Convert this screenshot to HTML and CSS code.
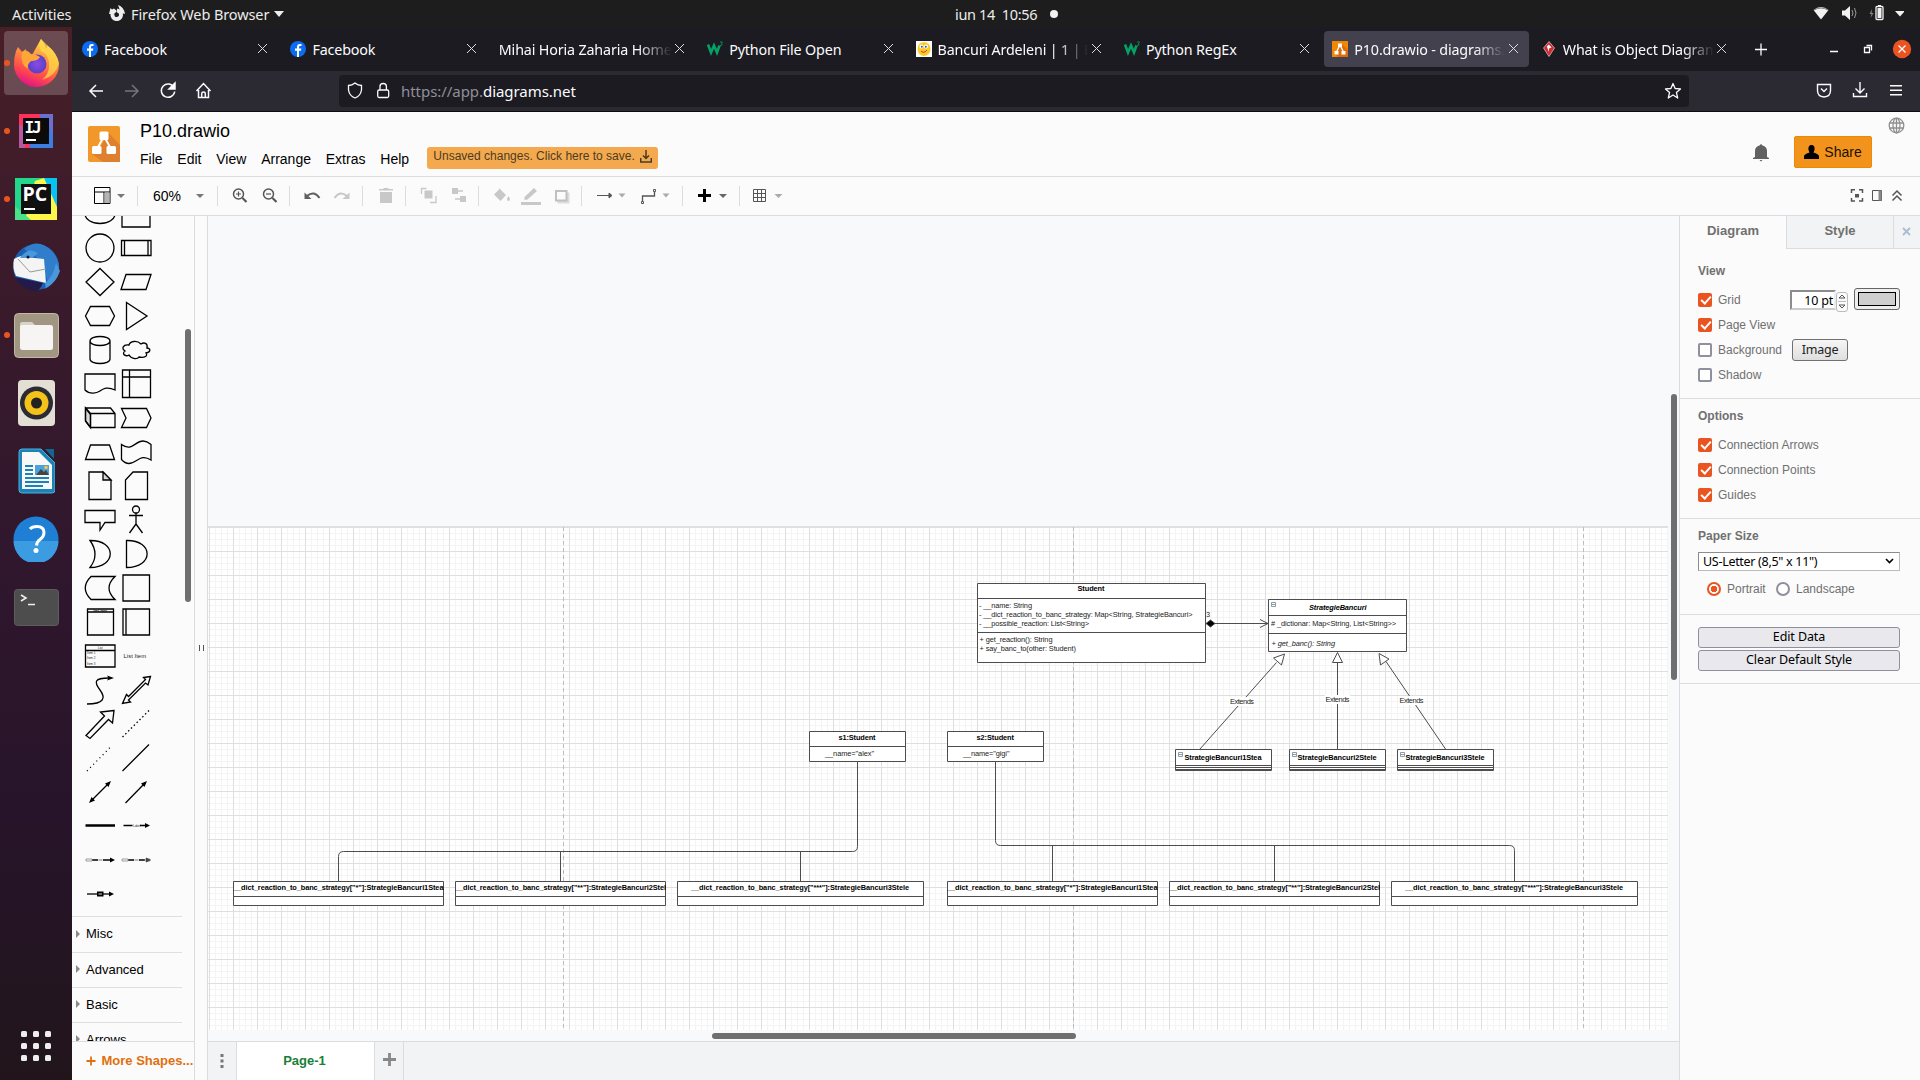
FILE: index.html
```html
<!DOCTYPE html>
<html lang="en">
<head>
<meta charset="utf-8">
<title>P10.drawio - diagrams.net</title>
<link rel="stylesheet" href="styles.css">
</head>
<body>
<div class="desktop">
  <div class="topbar">
    <span class="activities">Activities</span>
    <svg class="app-icon" width="16" height="18" viewBox="0 0 16 18"><path d="M8 5.500a4.300 4.300 0 1 1-4.500 3.500" fill="none" stroke="#eee" stroke-width="4"/><path d="M0 9L1.500 3 3 4.500 5 3.500 8 6 5 9z M9 0q6 2 7 9l-4-1z" fill="#eee"/></svg>
    <span class="app-name">Firefox Web Browser</span>
    <svg width="10" height="6" viewBox="0 0 10 6"><path d="M0 0h10L5 6z" fill="#eee"/></svg>
    <span class="clock">iun 14&nbsp; 10:56</span>
    <span class="notice"></span>
    <svg class="tray" width="94" height="27" viewBox="1810 0 94 27"><path d="M1813.500 10q7.500-6 15 0l-7.500 9.500z" fill="#f2f2f2"/><path d="M1814 10q7-4 14 0" fill="none" stroke="#777" stroke-width="1"/><path d="M1842 10.500h3l5-4.500v14l-5-4.500h-3z" fill="#f2f2f2"/><path d="M1852 10q2 3 0 6M1854.500 8q3 5 0 10" fill="none" stroke="#999"/><path d="M1872 9l-2.500 5h2l-1 4 3-5h-2z" fill="#888"/><rect x="1876" y="6.500" width="7" height="13" rx="1" fill="none" stroke="#f2f2f2" stroke-width="1.300"/><path d="M1878 5h3v1h-3zM1877.500 8h4v10h-4z" fill="#f2f2f2"/><path d="M1895 11h10l-5 5.500z" fill="#f2f2f2"/></svg>
  </div>
  <div class="workspace">
    <div class="dock">
      <div class="dock-item current running"><svg width="48" height="48" viewBox="0 0 48 48"><defs><linearGradient id="fx" x1=".8" y1="0" x2=".4" y2="1"><stop offset="0" stop-color="#fff44f"/><stop offset=".4" stop-color="#ff9640"/><stop offset=".75" stop-color="#ff4a4a"/><stop offset="1" stop-color="#e31587"/></linearGradient><radialGradient id="fp"><stop offset="0" stop-color="#8a4be8"/><stop offset="1" stop-color="#5b3fc4"/></radialGradient></defs><path d="M4 12l2-4 4 5 4-3 0 5 6 1L29 0q4 4 5 9 2-1 1-3 11 9 12 19a22.500 22.500 0 1 1-45 1q0-8 2-14z" fill="url(#fx)"/><path d="M29 0q-3 5 0 12 9 4 8 16 0 7-7 13 14-4 17-17Q44 13 36 7z" fill="#ffd84a" opacity=".75"/><circle cx="25" cy="25" r="9.500" fill="url(#fp)"/><path d="M10 13q4-4 9 2 5 0 9 3-2 4-9 4-4 3-3 8-8-4-6-17z" fill="#ffa63a"/></svg></div>
      <div class="dock-item running"><svg width="34" height="34" viewBox="0 0 34 34"><path d="M0 0h34v34H0z" fill="#3b7de0"/><path d="M0 0h22L10 34H0z" fill="#fe315d"/><path d="M0 10l6 4v20H0z" fill="#b45ba0"/><path d="M20 0h14v20z" fill="#6b6fd0"/><path d="M4 4h26v26H4z" fill="#0b0b0b"/><text x="5.500" y="19" class="ide-mono">I</text><text x="13" y="19" class="ide-mono">J</text><path d="M7 25h10v2H7z" fill="#fff"/></svg></div>
      <div class="dock-item running"><svg width="42" height="42" viewBox="0 0 42 42"><path d="M0 0h42v42H0z" fill="#21d789"/><path d="M28 0h14v30L30 20z" fill="#07c3f2"/><path d="M20 3l9-3 13 29v13H10z" fill="#fcf84a"/><path d="M0 28l16 14H0z" fill="#4be08a"/><path d="M6 6h30v30H6z" fill="#101010"/><text x="7.500" y="23" class="ide-sans">PC</text><path d="M9 30h11v2H9z" fill="#fff"/></svg></div>
      <div class="dock-item"><svg width="48" height="48" viewBox="0 0 48 48"><circle cx="24" cy="24" r="23" fill="#1d5fae"/><path d="M12 6q14-12 28 2 10 12 6 22-4 12-14 16 4-5 3-10l-8-20z" fill="#2f7dcb"/><path d="M2 16q8-5 12-2l18 2 2 24L4 33q-4-8-2-17z" fill="#f4f4f4"/><path d="M6 16l12 13 16-3" fill="none" stroke="#999"/><path d="M8 15q8-12 18-5l-6 5zM33 40q8-6 11-20l4 8q-4 12-14 17z" fill="#4a98dc"/><path d="M3 34l28 6q-3 7-7 8Q9 47 3 34z" fill="#231a4b"/><circle cx="16" cy="14" r="1.500" fill="#112"/></svg></div>
      <div class="dock-item running"><svg width="45" height="45" viewBox="0 0 45 45"><rect x=".5" y=".5" width="44" height="44" rx="4" fill="#a09682" stroke="#c1b9a8"/><path d="M6 11q0-2 2-2h10l3 3h15q2 0 2 2v12H6z" fill="#d8d3c8"/><rect x="6" y="12" width="33" height="25" rx="2.500" fill="#f6f5f4"/></svg></div>
      <div class="dock-item"><svg width="37" height="46" viewBox="0 0 37 46"><rect width="37" height="46" rx="4" fill="#e3dfd5"/><circle cx="18.500" cy="23" r="16.500" fill="#2b2b33"/><circle cx="18.500" cy="23" r="12" fill="#f5c21a"/><circle cx="18.500" cy="23" r="5.500" fill="#222"/></svg></div>
      <div class="dock-item"><svg width="37" height="46" viewBox="0 0 37 46"><path d="M4 1h19l14 14v27q0 3-3 3H4q-3 0-3-3V4q0-3 3-3z" fill="#1b83b8" stroke="#4fb0dc"/><path d="M27 1h9v10z" fill="#13678f"/><path d="M4 4h17l13 13v24H4z" fill="#f8f8f8"/><path d="M7 18h8M7 22h8M7 26h8M7 30h24M7 34h24M7 38h18" stroke="#1b83b8" stroke-width="2"/><path d="M17 17h14v10H17z" fill="#4aa3dc"/><path d="M18 27l5-6 3 3 2-2 3 5z" fill="#444"/><circle cx="28" cy="19.500" r="1.800" fill="#f9c440"/></svg></div>
      <div class="dock-item"><svg width="46" height="46" viewBox="0 0 46 46"><circle cx="23" cy="23" r="22.500" fill="#1e7fd4"/><path d="M.5 25a22.500 22.500 0 0 0 45 0z" fill="#3c9ce2"/><path d="M17 13q2-2.500 7-2.500 7 0 7 6 0 4-4 7-3 2-3.500 6" fill="none" stroke="#fff" stroke-width="3"/><circle cx="23" cy="34.500" r="2.500" fill="#fff"/></svg></div>
      <div class="dock-item"><svg width="45" height="37" viewBox="0 0 45 37"><rect x=".5" y=".5" width="44" height="36" rx="3" fill="#4d4d4d" stroke="#5d5d5d"/><path d="M7 6l5 3-5 3M14 15.500h7" fill="none" stroke="#eee" stroke-width="1.600"/></svg></div>
      <svg class="app-grid" width="30" height="30" viewBox="0 0 30 30" fill="#eee"><rect width="6" height="6" rx="1.500"/><rect x="12" width="6" height="6" rx="1.500"/><rect x="24" width="6" height="6" rx="1.500"/><rect y="12" width="6" height="6" rx="1.500"/><rect x="12" y="12" width="6" height="6" rx="1.500"/><rect x="24" y="12" width="6" height="6" rx="1.500"/><rect y="24" width="6" height="6" rx="1.500"/><rect x="12" y="24" width="6" height="6" rx="1.500"/><rect x="24" y="24" width="6" height="6" rx="1.500"/></svg>
    </div>
    <div class="browser">
      <div class="tabstrip">
        <div class="tab"><svg class="fav" viewBox="0 0 16 16"><circle cx="8" cy="8" r="8" fill="#0a6cf0"/><path d="M7 16V9.800H5V7.500h2V6q0-3 2.800-3h1.700v2h-1.200Q9 5 9 6.200v1.300h2.300L11 9.800H9V16z" fill="#fff"/></svg><span class="tab-title">Facebook</span><i class="x"></i></div>
        <div class="tab"><svg class="fav" viewBox="0 0 16 16"><circle cx="8" cy="8" r="8" fill="#0a6cf0"/><path d="M7 16V9.800H5V7.500h2V6q0-3 2.800-3h1.700v2h-1.200Q9 5 9 6.200v1.300h2.300L11 9.800H9V16z" fill="#fff"/></svg><span class="tab-title">Facebook</span><i class="x"></i></div>
        <div class="tab"><span class="tab-title fade">Mihai Horia Zaharia Home Page</span><i class="x"></i></div>
        <div class="tab"><svg class="fav" viewBox="0 0 16 16"><path d="M1 3.500l3 8 3-7 3 7 2.500-7" fill="none" stroke="#04a267" stroke-width="2.600"/><path d="M13 1h2.500l-1 1.500q2 2-1.500 2" fill="none" stroke="#04a267" stroke-width=".8"/></svg><span class="tab-title">Python File Open</span><i class="x"></i></div>
        <div class="tab"><svg class="fav" viewBox="0 0 16 16"><path d="M0 0h16v16H0z" fill="#fff"/><ellipse cx="8" cy="8" rx="6.500" ry="7" fill="#ffc928"/><circle cx="5.500" cy="5.500" r="2" fill="#fff"/><circle cx="10" cy="5.500" r="2" fill="#fff"/><circle cx="5.800" cy="5.700" r="1" fill="#1b62b5"/><circle cx="9.800" cy="5.700" r="1" fill="#1b62b5"/><path d="M5 10q3 3 6-1" fill="none" stroke="#c33"/></svg><span class="tab-title fade">Bancuri Ardeleni | 1 | Bancuri</span><i class="x"></i></div>
        <div class="tab"><svg class="fav" viewBox="0 0 16 16"><path d="M1 3.500l3 8 3-7 3 7 2.500-7" fill="none" stroke="#04a267" stroke-width="2.600"/><path d="M13 1h2.500l-1 1.500q2 2-1.500 2" fill="none" stroke="#04a267" stroke-width=".8"/></svg><span class="tab-title">Python RegEx</span><i class="x"></i></div>
        <div class="tab active"><svg class="fav" viewBox="0 0 16 16"><path d="M0 0h16v16H0z" fill="#f08705"/><path d="M10 3l6 6v7H6l-3-3z" fill="#df6c0c"/><path d="M8 4L4.500 11M8 4l3.500 7" stroke="#fff" stroke-width="1.300"/><path d="M6 2.500h4v3.500H6zM2.500 10h4v3.500h-4zM9.500 10h4v3.500h-4z" fill="#fff"/></svg><span class="tab-title fade">P10.drawio - diagrams.net</span><i class="x"></i></div>
        <div class="tab"><svg class="fav" viewBox="0 0 16 16"><path d="M8 .5l5.500 6.500L8 15.500 2.500 7z" fill="#cf2d33" stroke="#eee" stroke-width=".6"/><path d="M5.800 5.500l2-2 2.700 3-2.500 1v3.500z" fill="#fff"/></svg><span class="tab-title fade">What is Object Diagram?</span><i class="x"></i></div>
        <svg class="window-controls" width="172" height="44" viewBox="1740 27 172 44" fill="none" stroke="#fbfbfe" stroke-width="1.300"><path d="M1755 49.500h12M1761 43.500v12M1830 51.500h8"/><path d="M1864.500 47.500h5v5h-5zM1866.500 45.500h5v5"/><circle cx="1902" cy="49" r="9.200" fill="#e95420" stroke="none"/><path d="M1898.500 45.500l7 7m0-7l-7 7"/></svg>
      </div>
      <div class="navbar">
        <svg width="267" height="40" viewBox="72 72 267 40" fill="none" stroke="#fbfbfe" stroke-width="1.500"><path d="M103 92H90m6-6l-6 6 6 6"/><path d="M125 92h13m-6-6l6 6-6 6" stroke="#75747c"/><path d="M174 88.500a6.700 6.700 0 1 0 .7 4"/><path d="M175 84v6h-6z" fill="#fbfbfe"/><path d="M196.500 92l7-7.500 7 7.500M198.500 91v7.500h10V91M201.700 98.500v-4q0-1.500 1.800-1.500t1.800 1.500v4"/></svg>
        <div class="urlbar">
          <svg width="60" height="32" viewBox="339 76 60 32" fill="none" stroke="#fbfbfe" stroke-width="1.300"><path d="M355 84q3 2.500 6.500 2.500V91q-1 6-6.500 8-5.500-2-6.500-8v-4.500Q352 86.500 355 84z"/><rect x="377.700" y="91" width="11" height="7.500" rx="1.500"/><path d="M380 91v-3.500q0-3 3.200-3t3.200 3V91"/></svg>
          <span class="url"><span class="dim">https://app.</span>diagrams.net</span>
          <svg class="star" width="18" height="18" viewBox="0 0 18 18"><path d="M9 1.500l2.100 5 5.400.4-4.100 3.500 1.300 5.600L9 13l-4.700 3 1.300-5.600L1.500 6.900l5.400-.4z" fill="none" stroke="#fbfbfe" stroke-width="1.300" stroke-linejoin="round"/></svg>
        </div>
        <svg class="nav-tools" width="90" height="32" viewBox="1814 76 90 32" fill="none" stroke="#fbfbfe" stroke-width="1.400"><path d="M1817.500 85.500h13v6q0 6-6.500 6.500-6.500-.5-6.500-6.500zM1821 89.500l3 3 3-3"/><path d="M1860 83v11m-4.500-4.500l4.500 4.500 4.500-4.500M1853.500 94v3.500h13V94"/><path d="M1890 86.700h12M1890 91.200h12M1890 95.700h12"/></svg>
      </div>
      <div class="app">
        <header class="app-header">
          <svg class="logo" width="32" height="36" viewBox="0 0 32 36"><rect width="32" height="36" rx="2" fill="#f29729"/><path d="M21 7l11 12v17H15L4 28l9-8z" fill="#df8030"/><path d="M16 10L8.500 24M16 10l7.500 14" stroke="#fff" stroke-width="2"/><rect x="11.500" y="5.500" width="9" height="8.500" rx="1.500" fill="#fff"/><rect x="4" y="20" width="9.500" height="8" rx="1.500" fill="#fff"/><rect x="18.500" y="20" width="9.500" height="8" rx="1.500" fill="#fff"/></svg>
          <div class="titles">
            <div class="doc-title">P10.drawio</div>
            <div class="menus"><span>File</span><span>Edit</span><span>View</span><span>Arrange</span><span>Extras</span><span>Help</span>
              <div class="save-note">Unsaved changes. Click here to save.<svg width="12" height="13" viewBox="0 0 12 13" fill="none" stroke="#4a3c22" stroke-width="1.500"><path d="M6 0v8M3 5.500l3 3 3-3M.7 8v4h10.600V8"/></svg></div>
            </div>
          </div>
          <svg class="bell" width="16" height="18" viewBox="0 0 16 18"><path d="M2 13V7q0-4.500 4.500-5.500Q8-1 9.500 1.500 14 2.500 14 7v6l2 1v1H0v-1zM6.500 16h3l-1.500 1.500z" fill="#616161"/></svg>
          <div class="share"><svg width="15" height="15" viewBox="0 0 15 15"><path d="M7.500 0C10 0 11 2 10.500 5L9.500 7.500q5 1.500 5.500 3.500V14H0v-3q.5-2 5.500-3.500L4.500 5C4 2 5 0 7.500 0z"/></svg>Share</div>
          <svg class="globe" width="17" height="17" viewBox="0 0 17 17" fill="none" stroke="#8f8f8f" stroke-width="1.300"><circle cx="8.500" cy="8.500" r="7.300"/><ellipse cx="8.500" cy="8.500" rx="3.500" ry="7.300"/><path d="M1.500 6h14M1.500 11h14M8.500 1v15"/></svg>
        </header>
        <div class="toolbar">
          <svg width="66" height="36" viewBox="72 178 66 36"><path d="M94.500 187.500h15.500v16H94.500zM94.500 192h15.500M104 192v11" fill="none" stroke="#000"/><path d="M104.500 192.500h5v10.500h-5z" fill="#b3b3b3"/><path d="M117 194h8l-4 4z" fill="#777"/></svg>
          <div class="zoom-group"><span>60%</span><svg width="8" height="5" viewBox="0 0 8 5"><path d="M0 0h8L4 4z" fill="#777"/></svg></div>
          <svg width="72" height="36" viewBox="218 178 72 36" fill="none" stroke="#555" stroke-width="1.500"><circle cx="238.500" cy="194" r="5"/><path d="M242.500 198l4 4" stroke-width="2.200"/><path d="M236 194h5M238.500 191.500v5" stroke-width="1.200"/><circle cx="268.500" cy="194" r="5"/><path d="M272.500 198l4 4" stroke-width="2.200"/><path d="M266 194h5" stroke-width="1.200"/></svg>
          <svg width="73" height="36" viewBox="290 178 73 36" fill="none" stroke-width="2"><path d="M307 196q7-6 12.500 2" stroke="#606060"/><path d="M304.500 192.500v6.500h7z" fill="#606060"/><path d="M347 196q-7-6-12.500 2" stroke="#c8c8c8"/><path d="M349.500 192.500v6.500h-7z" fill="#c8c8c8"/></svg>
          <svg width="43" height="36" viewBox="363 178 43 36" fill="#c8c8c8"><path d="M379 189h4l1-1h4l1 1h4v1.500h-14zM380 192h12v11h-12z"/></svg>
          <svg width="73" height="36" viewBox="406 178 73 36" fill="#c8c8c8"><path d="M424.500 190.500h8v8h-8z"/><path d="M421.500 194v-5.500h5M436 196v6.500h-6" fill="none" stroke="#c8c8c8" stroke-width="1.300"/><path d="M452 188h6v6h-6zM460 196h6v6h-6z"/><path d="M455 191h8v8h-8z" fill="none" stroke="#c8c8c8" stroke-width="1.300" stroke-dasharray="0 3 5 6 2 3 5 8"/></svg>
          <svg width="103" height="36" viewBox="479 178 103 36" fill="#c8c8c8"><path d="M499 188l7 7-5.500 6-6.500-6.500 5-5zM508.500 196q3 4.500 0 5-3-.500 0-5z"/><path d="M524.500 197l9.500-9 3 3-9.500 8.500-3 .5zM521 202h20v3h-20z"/><path d="M557.500 192.500h12v11h-12z" opacity=".6"/><path d="M556 191h10.500v9.500H556z" fill="#fbfbfb" stroke="#c0c0c0" stroke-width="2"/></svg>
          <svg width="101" height="36" viewBox="582 178 101 36" fill="none" stroke="#555"><path d="M597 195.500h14"/><path d="M609 193l3 2.500-3 2.500z" fill="#555"/><path d="M618.500 193.500h7l-3.500 4zM662.500 193.500h7l-3.500 4z" fill="#aaa" stroke="none"/><path d="M642.500 201v-5h12v-4" stroke-width="1.300"/><path d="M641.500 201.500h2v2h-2zM653.500 189.500h2v2h-2z"/></svg>
          <svg width="57" height="36" viewBox="683 178 57 36"><path d="M704.500 189v13M698 195.500h13" stroke="#000" stroke-width="3"/><path d="M719 194h8l-4 4z" fill="#666"/></svg>
          <svg class="last" width="60" height="36" viewBox="740 178 60 36"><path d="M753.500 189.500h12v12h-12zM753.500 193.500h12M753.500 197.500h12M757.500 189.500v12M761.500 189.500v12" fill="none" stroke="#555"/><path d="M774.500 194h8l-4 4z" fill="#aaa"/></svg>
          <svg class="last view-tools" width="60" height="36" viewBox="1847 178 60 36" fill="none" stroke="#555" stroke-width="1.500"><path d="M1851.500 193v-3.200h3.500M1859 189.800h3.500v3.200M1862.500 198v3h-3.500M1855 201h-3.500v-3"/><path d="M1855 194h4v3.500h-4z" fill="#555" stroke="none"/><path d="M1872.500 190.500h9v10h-9z" stroke-width="1"/><path d="M1878.500 190.500h3v10h-3z" fill="#888" stroke="none"/><path d="M1892.500 195.500l4.500-4.500 4.500 4.500M1892.500 200.500l4.500-4.500 4.500 4.500"/></svg>
        </div>
        <div class="editor">
          <aside class="sidebar">
            <div class="sidebar-body">
              <div class="palette">
                <svg viewBox="-18 -17 36 34"><ellipse cy="0" rx="15" ry="9.500"/></svg><svg viewBox="-18 -17 36 34"><path d="M-14-13h28v26h-28z"/></svg>
                <svg viewBox="-18 -17 36 34"><circle r="14"/></svg><svg viewBox="-18 -17 36 34"><path d="M-14.500-7.500h29.500v15h-29.500zM-11.500-7.500v15M12-7.500v15"/></svg>
                <svg viewBox="-18 -17 36 34"><path d="M0-13.500L14 0 0 13.500-14 0z"/></svg><svg viewBox="-18 -17 36 34"><path d="M-10-7.500h25l-5 15h-25z"/></svg>
                <svg viewBox="-18 -17 36 34"><path d="M-9.500-9.500h19l5 9.500-5 9.500h-19l-5-9.500z"/></svg><svg viewBox="-18 -17 36 34"><path d="M-9.500-13.500L11 0l-20.500 13.500z"/></svg>
                <svg viewBox="-18 -17 36 34"><path d="M-10-9v18c0 6 20 6 20 0V-9c0-6-20-6-20 0c0 6 20 6 20 0"/></svg><svg viewBox="-18 -17 36 34"><path d="M-7-5c-6-1-8 4-4 6-4 3 1 6 4 4 3 5 9 4 10 2 6 1 9-1 7-4 5-1 5-5 1-5 1-5-3-6-6-4-4-4-11-3-12 1z"/></svg>
                <svg viewBox="-18 -17 36 34"><path d="M-15-10h30V6C7 2 3 5 0 7s-10 4-15-1z"/></svg><svg viewBox="-18 -17 36 34"><path d="M-13.500-14h28v27.500h-28zM-13.500-7h28M-6.500-14v27.500"/></svg>
                <svg viewBox="-18 -17 36 34"><path d="M-14.500-10v13l5 6.500v-13z" fill="#d5d9dc"/><path d="M-14.500-10h25l4.500 5.500v14H-9.500l-5-6.500zM-14.500-10l5 5.500H15M-9.500-4.500v14"/></svg><svg viewBox="-18 -17 36 34"><path d="M-14.500-9.500h25l4.500 9.500-4.500 9.500h-25L-10 0z"/></svg>
                <svg viewBox="-18 -17 36 34"><path d="M-9.500-7h19l5 14.500h-29z"/></svg><svg viewBox="-18 -17 36 34"><path d="M-14.500-7.500C-4 0-1-11 7-11q4 0 8 3.500V8C4 1 1 11.500-7 11.500q-4 0-7.500-4z"/></svg>
                <svg viewBox="-18 -17 36 34"><path d="M-11-14H3l8 8v19.500h-22z"/><path d="M3-14v8h8z" fill="#d5d9dc"/></svg><svg viewBox="-18 -17 36 34"><path d="M-3-14h14.500v27.500h-22V-6z"/></svg>
                <svg viewBox="-18 -17 36 34"><path d="M-15-9.500h30V2.500H5L0 10V2.500h-15z"/></svg><svg viewBox="-18 -17 36 34"><circle cy="-10.500" r="3.500"/><path d="M0-7V4M-7-4.500H7M0 4l-6.500 9M0 4l6.500 9"/></svg>
                <svg viewBox="-18 -17 36 34"><path d="M-10-13.500C17-14 17 13.500-10 13.500q10-13 0-27z"/></svg><svg viewBox="-18 -17 36 34"><path d="M-9.500-13.500C18-14 18 13.500-9.500 13.500z"/></svg>
                <svg viewBox="-18 -17 36 34"><path d="M-9-11.500h24q-12 11.500 0 23H-9q-11.500-11.500 0-23z"/></svg><svg viewBox="-18 -17 36 34"><path d="M-13-13h26.500v26H-13z"/></svg>
                <svg viewBox="-18 -17 36 34"><path d="M-12.500-13h26v26h-26zM-12.500-10h26"/><text x="-7" y="-10.500" class="micro" textLength="14">Vertical Container</text></svg><svg viewBox="-18 -17 36 34"><path d="M-13-13h26.500v26H-13zM-10-13v26"/></svg>
                <svg viewBox="-18 -17 36 34"><path d="M-14.500-11h29.500v22h-29.500zM-14.500-5.500h29.500"/><text x="-2" y="-7" class="micro">List</text><text x="-13" y="-2" class="micro">Item 1</text><text x="-13" y="3" class="micro">Item 2</text><text x="-13" y="9" class="micro">Item 3</text></svg><svg viewBox="-18 -17 36 34"><text x="-12.500" y="2" class="list-item" textLength="22.500">List Item</text></svg>
                <svg viewBox="-18 -17 36 34"><path d="M-13 14C4 14 6 8 0 0S-6-12 9-12"/><path d="M7-14.500l7 2.500-7 2.500 1.500-2.500z" fill="#000" stroke="none"/></svg><svg viewBox="-18 -17 36 34"><path d="M14.500-13.500l-7 1 2 2-17 17-2-2-4 9 8-1.500-2-2 17-17 2.500 2z"/></svg>
                <svg viewBox="-18 -17 36 34"><path d="M14-13.500L.5-12l4 4L-14 11.500l4 3L8.500-4.500l4 3.500z"/></svg><svg viewBox="-18 -17 36 34"><path d="M-13.500 13L13-13.500" stroke-dasharray="1.500 2.500"/></svg>
                <svg viewBox="-18 -17 36 34"><path d="M-13 13L12-12.500" stroke-dasharray="1 3.500"/></svg><svg viewBox="-18 -17 36 34"><path d="M-13.500 13L13-13.500"/></svg>
                <svg viewBox="-18 -17 36 34"><path d="M-9 9L9-9"/><path d="M11-11l-6 2.500 3.500 3.500zM-11 11l6-2.500-3.500-3.500z" fill="#000" stroke="none"/></svg><svg viewBox="-18 -17 36 34"><path d="M-10.500 11L9-9"/><path d="M11-11l-6 2.500 3.500 3.500z" fill="#000" stroke="none"/></svg>
                <svg viewBox="-18 -17 36 34"><path d="M-14.500-.5h29.500" stroke-width="2.500"/></svg><svg viewBox="-18 -17 36 34"><path d="M-12.500-.5h9M4-.5h7"/><text x="-3" y=".5" class="micro">Label</text><path d="M9-3l5 2.500-5 2.500z" fill="#000" stroke="none"/></svg>
                <svg viewBox="-18 -17 36 34"><path d="M-8 0H-2M3 0h8"/><path d="M-14-1h6v2h-6z" stroke="#888" stroke-width=".8"/><path d="M-1.500 0h4" stroke="#999"/><path d="M10-2.500l5 2.500-5 2.500z" fill="#000" stroke="none"/></svg><svg viewBox="-18 -17 36 34"><path d="M-8 0H-2M3 0h6"/><path d="M-14-1h6v2h-6zM9-1h5v2h-5z" stroke="#888" stroke-width=".8"/><path d="M-1.500 0h4" stroke="#999"/><path d="M10-2.500l5 2.500-5 2.500z" fill="#444" stroke="none"/></svg>
                <svg viewBox="-18 -17 36 34"><path d="M-13 0h24"/><path d="M-3-2.500h6.500v5H-3zM9-2.500L14 0 9 2.500z" fill="#000" stroke="none"/><path d="M-1.500 0h3.500" stroke="#aaa"/></svg>
              </div>
              <div class="section"><i class="tri"></i>Misc</div>
              <div class="section"><i class="tri"></i>Advanced</div>
              <div class="section"><i class="tri"></i>Basic</div>
              <div class="section"><i class="tri"></i>Arrows</div>
              <div class="side-thumb"></div>
            </div>
            <div class="more-shapes"><svg width="10" height="10" viewBox="0 0 10 10"><path d="M5 .5v9M.5 5h9" stroke="#e0700f" stroke-width="1.800"/></svg><span>More Shapes...</span></div>
          </aside>
          <div class="splitter"></div>
          <main class="main">
            <div class="canvas">
              <svg width="1472" height="825" viewBox="208 216 1472 825">
                <defs>
                  <pattern id="grid" x="209" y="527" width="24" height="24" patternUnits="userSpaceOnUse"><path d="M6.500 0v24M12.500 0v24M18.500 0v24M0 6.500h24M0 12.500h24M0 18.500h24" stroke="#f4f4f4"/><path d="M.5 0v24M0 .5h24" stroke="#dfdfdf"/></pattern>
                  <clipPath id="b1"><path d="M233 881h211v25H233z"/></clipPath><clipPath id="b2"><path d="M455 881h211v25H455z"/></clipPath><clipPath id="b4"><path d="M947 881h211v25H947z"/></clipPath><clipPath id="b5"><path d="M1169 881h211v25h-211z"/></clipPath>
                </defs>
                <path d="M208 526h1460v504H208z" fill="#fff"/><path d="M208 527h1460v503H208z" fill="url(#grid)"/><path d="M208 526.500h1460" stroke="#dfe1e2"/>
                <path d="M563.500 527v503M1073.500 527v503M1583.500 527v503" stroke="#bdbdbd" stroke-dasharray="4 3"/>
                <g class="edge">
                  <path d="M857.500 762v84.500q0 5-5 5h-509q-5 0-5 5V881M560.500 851.500V881M800.500 851.500V881"/>
                  <path d="M995.500 762v78.500q0 5 5 5h509q5 0 5 5V881M1052.500 845.500V881M1274.500 845.500V881"/>
                  <path d="M1214 623.500h54M1260 619.500l8 4-8 4"/><path d="M1206 623.500l4.500-3.500 4.500 3.500-4.500 3.500z" fill="#000"/>
                  <path d="M1200 749l76.500-86.500M1337.500 749v-87M1445.500 749L1386 661.500"/>
                  <path d="M1284.500 654l-3 11-8-7zM1337.500 652.500l5 10h-10zM1379 653.500l1.500 11.500 8.500-6z" fill="#fff"/>
                </g>
                <g class="node">
                  <path d="M977.500 583.500h228v79h-228zM977.500 598.500h228M977.500 632.500h228"/>
                  <path d="M1268.500 599.500h138v52h-138zM1268.500 615.500h138M1268.500 633.500h138"/>
                  <path d="M1175.500 749.500h96v21h-96zM1289.500 749.500h96v21h-96zM1397.500 749.500h96v21h-96z"/>
                  <path d="M1175.500 765.500h96M1289.500 765.500h96M1397.500 765.500h96M1175.500 767.500h96M1289.500 767.500h96M1397.500 767.500h96"/>
                  <path d="M1176 769.500h95M1290 769.500h95M1398 769.500h95" stroke="#aaa"/>
                  <path d="M809.500 731.500h96v30h-96zM809.500 746.500h96M947.500 731.500h96v30h-96zM947.500 746.500h96"/>
                  <path d="M233.500 881.500h210v24h-210zM233.500 896.500h210M455.500 881.500h210v24h-210zM455.500 896.500h210M677.500 881.500h246v24h-246zM677.500 896.500h246"/>
                  <path d="M947.500 881.500h210v24h-210zM947.500 896.500h210M1169.500 881.500h210v24h-210zM1169.500 896.500h210M1391.500 881.500h246v24h-246zM1391.500 896.500h246"/>
                </g>
                <path class="fold" d="M1271.500 602.500h4v4h-4zM1272 604.500h3M1178.500 752.500h4v4h-4zM1179 754.500h3M1292.500 752.500h4v4h-4zM1293 754.500h3M1400.500 752.500h4v4h-4zM1401 754.500h3"/>
                <path d="M1229 697h26v9h-26zM1325 695h25v9h-25zM1399 696h25v9h-25z" fill="#fff"/>
                <g class="label">
                  <text x="979" y="608" textLength="53">- __name: String</text><text x="979" y="617" textLength="213.500">- __dict_reaction_to_banc_strategy: Map&lt;String, StrategieBancuri&gt;</text><text x="979" y="626" textLength="110">- __possible_reaction: List&lt;String&gt;</text>
                  <text x="979.500" y="642" textLength="73">+ get_reaction(): String</text><text x="979.500" y="651" textLength="96.500">+ say_banc_to(other: Student)</text>
                  <text x="1206" y="617">3</text>
                  <text x="1271" y="626" textLength="125">#&nbsp;_dictionar: Map&lt;String, List&lt;String&gt;&gt;</text><text x="1271.500" y="646" class="italic" textLength="63.500">+ get_banc(): String</text>
                  <text x="1230" y="704" textLength="24">Extends</text><text x="1325.500" y="702" textLength="24">Extends</text><text x="1399.500" y="703" textLength="24">Extends</text>
                  <text x="825" y="756" textLength="49">__name="alex"</text><text x="963" y="756" textLength="46.500">__name="gigi"</text>
                </g>
                <g class="label bold">
                  <text x="1077.500" y="591" textLength="27">Student</text><text x="1309" y="610" class="italic" textLength="57.500">StrategieBancuri</text>
                  <text x="1184.500" y="760" textLength="77">StrategieBancuri1Stea</text><text x="1297.500" y="760" textLength="79">StrategieBancuri2Stele</text><text x="1405.500" y="760" textLength="79">StrategieBancuri3Stele</text>
                  <text x="838.500" y="740" textLength="37">s1:Student</text><text x="976.500" y="740" textLength="37.500">s2:Student</text>
                  <text x="233" y="890" textLength="210.500" clip-path="url(#b1)">__dict_reaction_to_banc_strategy["*"]:StrategieBancuri1Stea</text>
                  <text x="455" y="890" textLength="215" clip-path="url(#b2)">__dict_reaction_to_banc_strategy["**"]:StrategieBancuri2Stele</text>
                  <text x="691" y="890" textLength="218">__dict_reaction_to_banc_strategy["***"]:StrategieBancuri3Stele</text>
                  <text x="947" y="890" textLength="210.500" clip-path="url(#b4)">__dict_reaction_to_banc_strategy["*"]:StrategieBancuri1Stea</text>
                  <text x="1169" y="890" textLength="215" clip-path="url(#b5)">__dict_reaction_to_banc_strategy["**"]:StrategieBancuri2Stele</text>
                  <text x="1405" y="890" textLength="218">__dict_reaction_to_banc_strategy["***"]:StrategieBancuri3Stele</text>
                </g>
              </svg>
              <div class="thumb-v"></div><div class="thumb-h"></div>
            </div>
            <div class="pages"><div class="page-menu"><svg width="4" height="14" viewBox="0 0 4 14" fill="#777"><path d="M.5 0h3v3h-3zM.5 5.500h3v3h-3zM.5 11h3v3h-3z"/></svg></div><div class="page-tab">Page-1</div><div class="page-add"><svg width="13" height="13" viewBox="0 0 13 13"><path d="M6.500 0v13M0 6.500h13" stroke="#888" stroke-width="2.800"/></svg></div></div>
          </main>
          <aside class="format">
            <div class="format-tabs"><div class="ftab on">Diagram</div><div class="ftab">Style</div><div class="fclose"><svg width="9" height="9" viewBox="0 0 9 9"><path d="M1 1l7 7m0-7L1 8" stroke="#a9bdd3" stroke-width="1.800"/></svg></div></div>
            <section class="view-sec">
              <h3>View</h3>
              <div class="row"><i class="check on"></i>Grid<span class="num">10 pt</span><span class="spin"><svg width="8" height="17" viewBox="0 0 8 17" fill="none" stroke="#555"><path d="M1 5l3-3 3 3zM1 12l3 3 3-3z"/><path d="M-2 8.500h12" stroke="#bbb"/></svg></span><span class="swatch"><i></i></span></div>
              <div class="row"><i class="check on"></i>Page View</div>
              <div class="row"><i class="check"></i>Background<span class="img-btn">Image</span></div>
              <div class="row"><i class="check"></i>Shadow</div>
            </section>
            <section class="opt-sec">
              <h3>Options</h3>
              <div class="row"><i class="check on"></i>Connection Arrows</div>
              <div class="row"><i class="check on"></i>Connection Points</div>
              <div class="row"><i class="check on"></i>Guides</div>
            </section>
            <section class="paper-sec">
              <h3>Paper Size</h3>
              <div class="select"><span>US-Letter (8,5" x 11")</span><svg width="9" height="6" viewBox="0 0 9 6"><path d="M1 1l3.500 3.500L8 1" fill="none" stroke="#000" stroke-width="1.600"/></svg></div>
              <div class="radios"><i class="radio on"></i><span class="portrait">Portrait</span><i class="radio"></i><span>Landscape</span></div>
            </section>
            <section class="btn-sec"><div class="wide">Edit Data</div><div class="wide">Clear Default Style</div></section>
          </aside>
        </div>
      </div>
    </div>
  </div>
</div>
</body>
</html>
```
FILE: styles.css
```css
* { box-sizing: border-box; }
body { margin: 0; background: #fbfbfb; font-family: "Liberation Sans", Arial, sans-serif; }
svg { display: block; flex: none; }
.desktop { width: 1920px; height: 1080px; overflow: hidden; display: flex; flex-direction: column; }

/* GNOME bar */
.topbar { height: 27px; background: #1d1d1d; color: #ececec; display: flex; align-items: center; padding-left: 12px; padding-right: 16px; font: 14.500px/26px "Noto Sans", sans-serif; white-space: nowrap; letter-spacing: -.1px; }
.activities { width: 97px; }
.app-icon { margin-right: 6px; }
.app-name { width: 143px; }
.clock { margin-left: 671px; width: 95px; letter-spacing: -.35px; }
.notice { width: 8px; height: 8px; border-radius: 50%; background: #f2f2f2; }
.tray { margin-left: auto; }

.workspace { flex: 1; display: flex; min-height: 0; }
.dock { width: 72px; padding-top: 4px; display: flex; flex-direction: column; gap: 4px; align-items: center; background: linear-gradient(#481f26, #3c1b2b 20%, #30172d 50%, #27142a 75%, #21151b); }
.dock-item { width: 64px; height: 64px; display: flex; align-items: center; justify-content: center; position: relative; }
.dock-item.current { background: rgba(255,255,255,.2); border-radius: 4px; }
.running::before { content: ""; position: absolute; left: 0; top: 29px; width: 6px; height: 6px; border-radius: 50%; background: #e95420; }
.app-grid { margin-top: auto; margin-bottom: 19px; }
.ide-mono { font: bold 16px "DejaVu Sans Mono", monospace; fill: #fff; }
.ide-sans { font: bold 19.500px "Open Sans", sans-serif; fill: #fff; }

/* Firefox */
.browser { flex: 1; display: flex; flex-direction: column; min-width: 0; }
.tabstrip { height: 44px; background: #1c1b22; display: flex; align-items: center; }
.tab { width: 204.400px; height: 36px; margin: 0 2px; padding: 0 7.500px 1px 8px; border-radius: 4px; display: flex; align-items: center; color: #fbfbfe; font: 14.300px/37px "Noto Sans", sans-serif; letter-spacing: -.15px; }
.tab.active { background: #42414d; }
.fav { width: 16px; height: 16px; margin-right: 6px; }
.tab-title { flex: 1; overflow: hidden; white-space: nowrap; padding-top: 1px; }
.fade { -webkit-mask-image: linear-gradient(to right, #000 80%, transparent); mask-image: linear-gradient(to right, #000 80%, transparent); }
.x { width: 16px; height: 16px; flex: none; background: linear-gradient(45deg, transparent 46%, #ddd 46% 54%, transparent 54%) center/9px 9px no-repeat, linear-gradient(-45deg, transparent 46%, #ddd 46% 54%, transparent 54%) center/9px 9px no-repeat; }
.window-controls { margin-left: auto; margin-right: 8px; }
.navbar { height: 41px; background: #2b2a33; border-bottom: 1px solid #0c0c0d; display: flex; align-items: center; }
.urlbar { width: 1350px; height: 32px; background: #1c1b22; border-radius: 4px; display: flex; align-items: center; }
.url { font: 15px "Noto Sans", sans-serif; letter-spacing: -.05px; color: #fbfbfe; padding-left: 2px; flex: 1; }
.dim { color: #8f8f99; }
.star { margin-right: 7px; }
.nav-tools { margin-left: auto; margin-right: 16px; }

/* diagrams.net header */
.app { flex: 1; display: flex; flex-direction: column; min-height: 0; background: #fbfbfb; }
.app-header { height: 65px; border-bottom: 1px solid #dadce0; display: flex; align-items: flex-start; }
.logo { margin: 14px 20px 0 16px; }
.titles { flex: 1; }
.doc-title { font-size: 18px; line-height: 22px; margin-top: 8px; }
.menus { display: flex; align-items: center; height: 22px; margin-top: 6px; font-size: 14px; gap: 14.800px; line-height: 22px; }
.save-note { margin: -2px 0 0 3.500px; width: 231px; height: 22px; padding-left: 6px; border-radius: 3px; background: #f5a94f; color: #4a3c22; font-size: 12px; line-height: 19px; display: flex; gap: 5px; }
.save-note svg { margin-top: 3px; }
.bell { margin: 32px 25px 0 0; }
.share { width: 78px; height: 32px; margin-top: 24px; background: #f2931e; border: 1px solid #f08705; border-radius: 2px; display: flex; align-items: center; justify-content: center; gap: 5px; font-size: 14px; color: #1a1200; }
.globe { margin: 5px 15px 0 16px; }

.toolbar { height: 39px; border-bottom: 1px solid #dadce0; display: flex; align-items: center; }
.toolbar > * { height: 36px; }
.toolbar > *:not(.last) { background: linear-gradient(#dcdcdc, #dcdcdc) right center/1px 20px no-repeat; }
.zoom-group { width: 80px; display: flex; align-items: center; padding-left: 15px; font-size: 14px; gap: 15px; }
.view-tools { margin-left: auto; margin-right: 13px; }

.editor { flex: 1; display: flex; min-height: 0; }
.sidebar { width: 123px; border-right: 1px solid #dadce0; display: flex; flex-direction: column; }
.sidebar-body { flex: 1; overflow: hidden; position: relative; min-height: 0; }
.palette { display: grid; grid-template-columns: 36px 36px; grid-auto-rows: 34px; padding-left: 10.400px; margin-top: -19.500px; height: 719.500px; }
.palette svg { width: 36px; height: 34px; fill: none; stroke: #000; stroke-width: 1.300; }
.palette text { fill: #222; stroke: none; }
.micro { font-size: 3px; }
.list-item { font-size: 5.800px; }
.section { width: 110px; height: 35px; border-top: 1px solid #dfdfdf; display: flex; align-items: center; font-size: 13px; padding-bottom: 2px; }
.section:nth-child(2) { height: 36px; }
.tri { border: 4px solid transparent; border-left-color: #8a8a8a; border-right: 0; margin: 0 6px 0 4px; }
.side-thumb { position: absolute; left: 113px; top: 113px; width: 6px; height: 273px; border-radius: 3px; background: #6f6f6f; }
.more-shapes { height: 39px; border-top: 1px solid #dadce0; display: flex; align-items: center; padding: 0 0 1px 14px; gap: 5.500px; color: #e0700f; font-size: 13px; font-weight: bold; white-space: nowrap; overflow: hidden; }
.splitter { width: 13px; border-right: 1px solid #dadce0; display: flex; align-items: center; justify-content: center; }
.splitter::before { content: ""; width: 3px; height: 6px; border: solid #555; border-width: 0 1px; }

/* drawing area */
.main { flex: 1; display: flex; flex-direction: column; min-width: 0; }
.canvas { height: 825px; background: #f8f9fa; position: relative; overflow: hidden; }
.edge { fill: none; stroke: #4d4d4d; }
.node path { fill: #fff; stroke: #4d4d4d; }
.fold { fill: none; stroke: #74848f; stroke-width: .8; }
.label { font-size: 7.400px; fill: #222; }
.bold { font-weight: bold; fill: #000; }
.italic { font-style: italic; }
.thumb-v, .thumb-h { position: absolute; background: #6f6f6f; border-radius: 3px; }
.thumb-v { left: 1463px; top: 178px; width: 6px; height: 286px; }
.thumb-h { left: 504px; top: 817px; width: 364px; height: 6px; }
.pages { flex: 1; display: flex; background: #f1f3f4; border-top: 1px solid #dadce0; }
.page-menu { width: 29px; display: flex; align-items: center; justify-content: center; border-right: 1px solid #dadce0; }
.page-tab { width: 137px; background: #fff; color: #188038; font-size: 13px; font-weight: bold; display: flex; align-items: center; justify-content: center; padding: 0 2px 1px 0; }
.page-add { width: 30px; border: solid #dadce0; border-width: 0 1px; display: flex; align-items: center; justify-content: center; padding-bottom: 4px; }

/* format panel */
.format { width: 241px; border-left: 1px solid #dadce0; color: #707070; font-size: 12px; }
.format-tabs { display: flex; height: 33px; font-size: 13px; font-weight: bold; text-align: center; line-height: 29px; }
.ftab { width: 107px; background: #f1f3f4; border: solid #dadce0; border-width: 0 1px 1px 0; }
.ftab.on { width: 107px; background: none; border-bottom: 0; line-height: 30px; }
.fclose { flex: 1; background: #f1f3f4; border-bottom: 1px solid #dadce0; display: flex; align-items: center; justify-content: center; padding: 0 2px 2px 0; }
.format section { border-bottom: 1px solid #dadce0; padding: 0 20px 0 18px; }
h3 { margin: 0; font-size: 12px; line-height: 14px; }
.row { height: 25px; display: flex; align-items: center; position: relative; }
.check { width: 14px; height: 14px; margin-right: 6px; border: 2px solid #8f8f9d; border-radius: 2px; background: #fff; flex: none; }
.check.on { border: 0; background: #e95420; position: relative; }
.check.on::after { content: ""; position: absolute; left: 3px; top: 3.500px; width: 8px; height: 4px; border: solid #fff; border-width: 0 0 2px 2px; transform: rotate(-48deg); }
.view-sec { height: 150px; }
.view-sec h3 { padding: 15px 0 0; margin-bottom: 9px; }
.num { margin-left: auto; width: 46px; height: 20px; border: 2px solid #ccc; border-top-color: #8c8c8c; border-left-color: #8c8c8c; border-right-color: #eee; background: #fff; color: #000; font: 12.500px/17px "Noto Sans", sans-serif; letter-spacing: -.2px; text-align: right; padding-right: 1px; }
.spin { width: 12px; height: 20px; border: 1px solid #bbb; border-radius: 3px; margin: 4px 6px 0 0; display: flex; justify-content: center; align-items: center; overflow: hidden; }
.swatch { width: 46px; height: 22px; border: 1px solid #666; border-radius: 3px; background: #eee; padding: 3px; margin-top: -1px; }
.swatch i { display: block; width: 38px; height: 14px; border: 1px solid #000; background: #cfcfcf; }
.img-btn { margin-left: 10px; width: 56px; height: 22px; border: 1px solid #707070; border-radius: 3px; background: linear-gradient(#f6f6f6, #dedede); color: #222; font: 12.500px/19px "Noto Sans", sans-serif; letter-spacing: -.2px; text-align: center; }
.opt-sec { height: 120px; }
.opt-sec h3 { padding: 10px 0 9px; }
.paper-sec { height: 96px; }
.paper-sec h3 { padding-top: 10px; height: 33px; }
.select { height: 19px; border: 1px solid #bbb; border-top-color: #8c8c8c; border-left-color: #8c8c8c; background: #fff; color: #000; display: flex; justify-content: space-between; align-items: center; padding: 0 5px 1px 4px; font: 12.500px/17px "Noto Sans", sans-serif; letter-spacing: -.3px; }
.radios { display: flex; align-items: center; height: 14px; margin: 11px 0 0 9px; }
.radio { width: 14px; height: 14px; border: 2px solid #8f8f9d; border-radius: 50%; background: #fff; margin-right: 6px; }
.radio.on { border-color: #e95420; background: radial-gradient(#e95420 0 3px, #fff 3.500px); }
.portrait { width: 49px; }
.btn-sec { height: 69px; padding-top: 12px !important; display: flex; flex-direction: column; gap: 2px; }
.wide { height: 21px; border: 1px solid #8f8f9d; border-radius: 3px; background: #e9e9ed; color: #000; font: 12.500px/18px "Noto Sans", sans-serif; letter-spacing: -.1px; text-align: center; }
```
